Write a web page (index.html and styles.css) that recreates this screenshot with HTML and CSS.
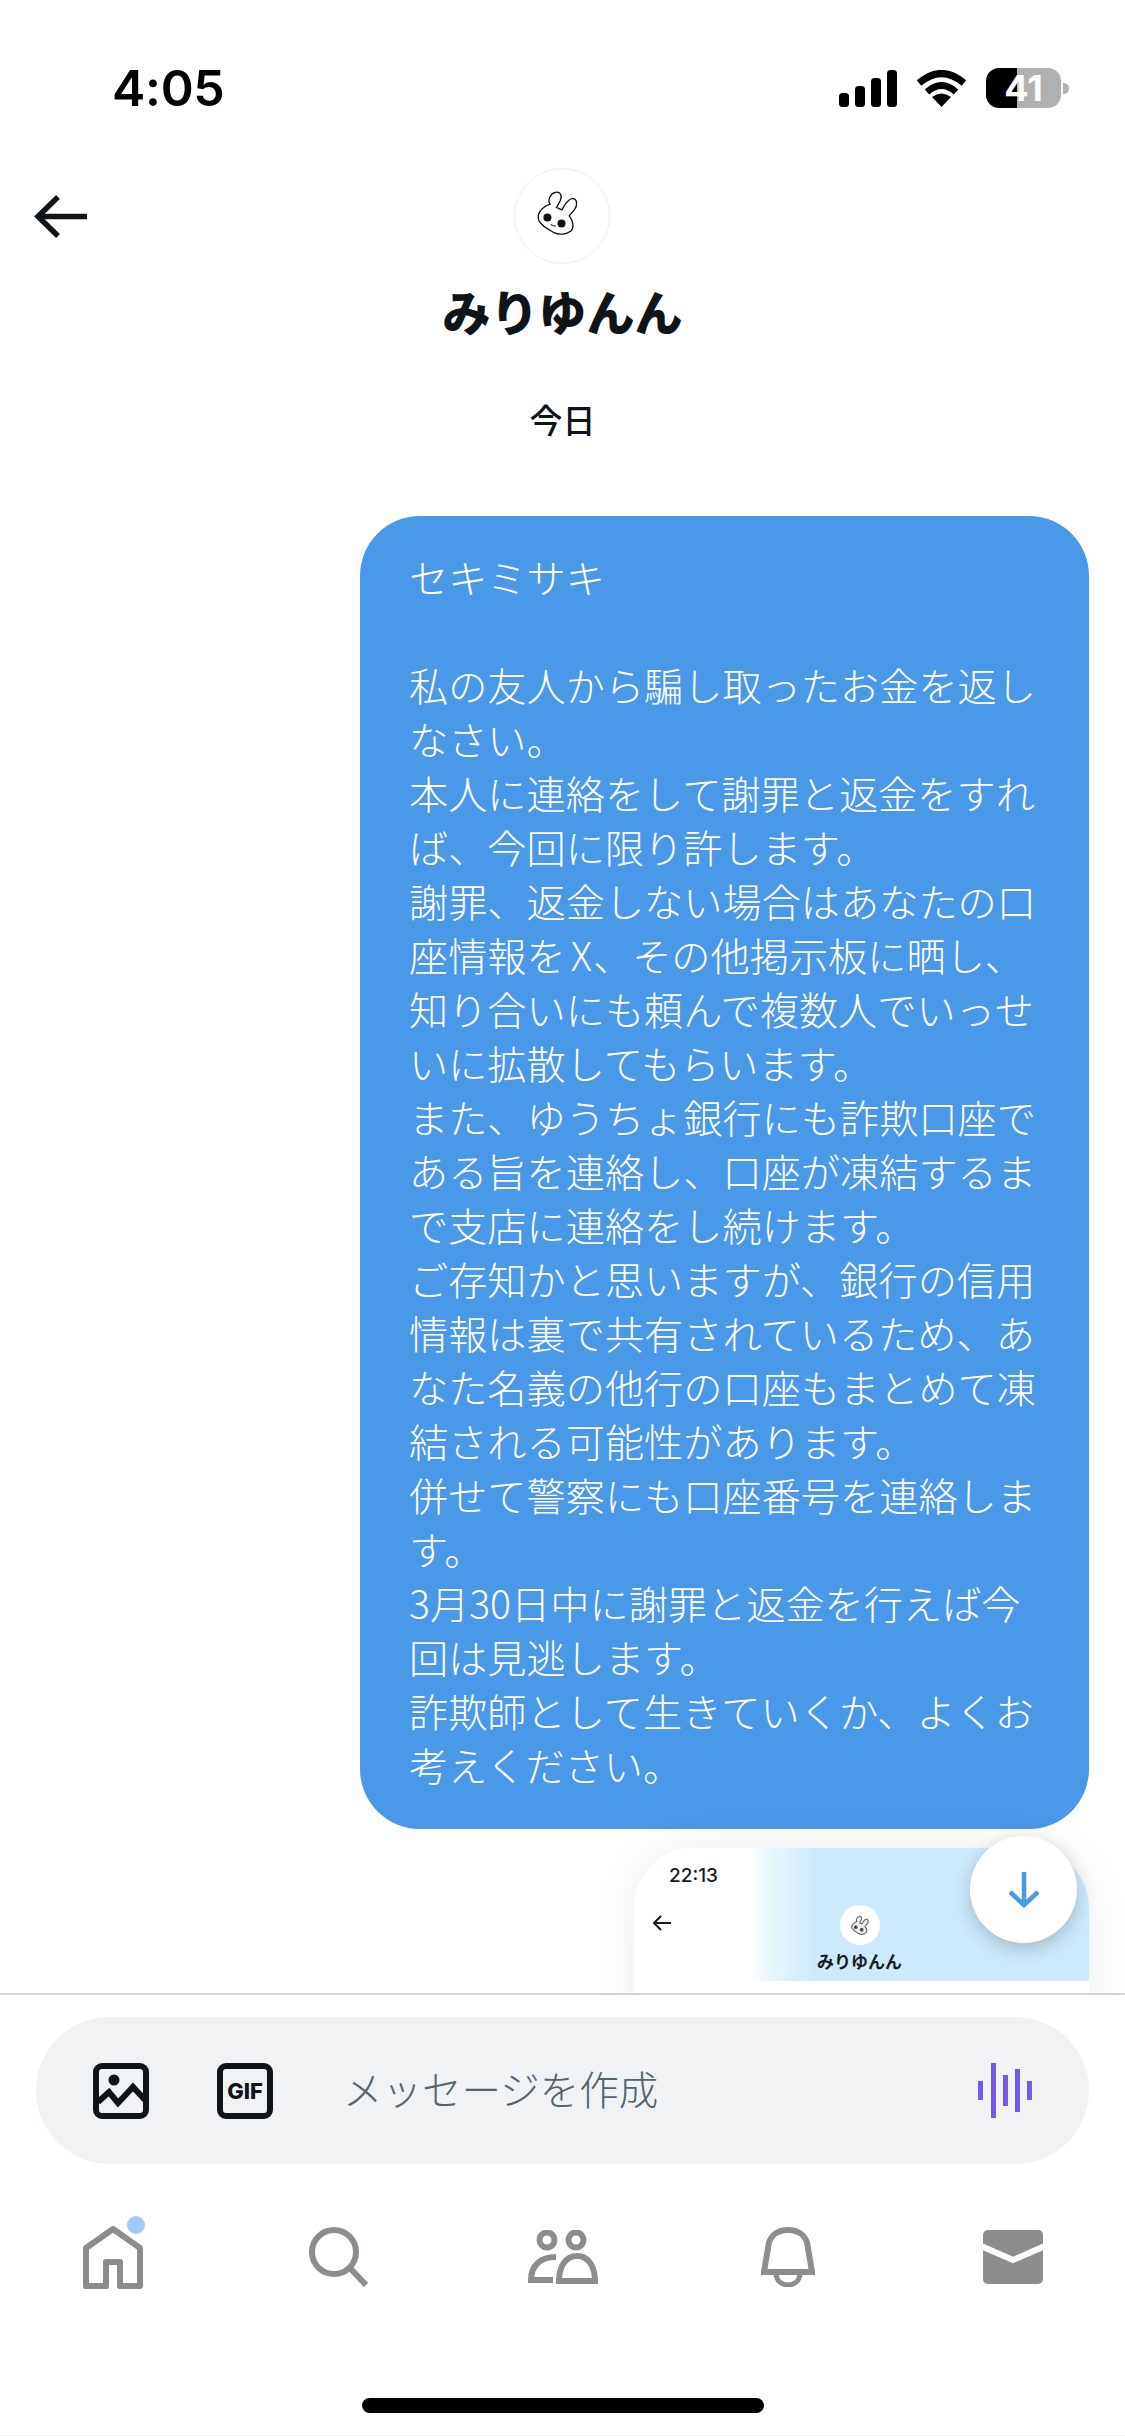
FILE: index.html
```html
<!DOCTYPE html>
<html lang="ja">
<head>
  <meta charset="UTF-8" />
  <meta name="viewport" content="width=device-width, initial-scale=1.0"/>
  <title>みりゆんん</title>
  <link rel="stylesheet" href="styles.css">
</head>
<body>
  <div class="screen">
    <div class="status-bar">
      <span class="clock">4:05</span>
      <div class="status-icons">
        <svg class="signal" width="58" height="37" viewBox="0 0 58 37">
          <rect x="0" y="23" width="10" height="14" rx="3.5"/>
          <rect x="16" y="16" width="10" height="21" rx="3.5"/>
          <rect x="32" y="8" width="10" height="29" rx="3.5"/>
          <rect x="48" y="0" width="10" height="37" rx="3.5"/>
        </svg>
        <svg class="wifi" width="51" height="37" viewBox="0 0 51 37">
          <path d="M3 13 Q25.5 -6 48 13" fill="none" stroke="#000" stroke-width="7"/>
          <path d="M11 22 Q25.5 9 40 22" fill="none" stroke="#000" stroke-width="6.5"/>
          <path d="M16 27 Q25.5 20 35 27 L25.5 37 Z"/>
        </svg>
        <div class="battery">
          <div class="battery-body"><span class="battery-level">41</span></div>
          <div class="battery-nub"></div>
        </div>
      </div>
    </div>

    <div class="header">
      <button class="back">
        <svg width="53" height="43" viewBox="0 0 53 43" fill="none" stroke="#0f1419" stroke-width="5.5">
          <path d="M24 2 L4 21.5 L24 41"/>
          <path d="M4 21.5 H53"/>
        </svg>
      </button>
      <div class="peer">
        <div class="avatar">
          <svg width="47" height="47" viewBox="165 110 140 140" fill="none" stroke="#111" stroke-width="4">
            <path d="M213 155 C205 145 212 125 228 120 C244 117 250 130 243 145 L232 165 L248 172 C255 160 265 140 280 138 C295 140 295 160 285 172 L270 190 C282 205 285 225 275 235 C262 245 240 248 225 240 C210 232 190 222 180 205 C172 185 185 165 213 155 Z"/>
            <circle cx="205" cy="195" r="10" fill="#111"/>
            <circle cx="247" cy="213" r="10" fill="#111"/>
            <path d="M215 215 Q222 223 230 219" stroke-width="3"/>
          </svg>
        </div>
        <div class="peer-name">みりゆんん</div>
      </div>
    </div>

    <div class="date-label">今日</div>

    <div class="messages">
      <div class="bubble">セキミサキ<br>
        <br>
        私の友人から騙し取ったお金を返し<br>
        なさい。<br>
        本人に連絡をして謝罪と返金をすれ<br>
        ば、今回に限り許します。<br>
        謝罪、返金しない場合はあなたの口<br>
        座情報を<span class="latin">X</span>、その他掲示板に晒し、<br>
        知り合いにも頼んで複数人でいっせ<br>
        いに拡散してもらいます。<br>
        また、ゆうちょ銀行にも詐欺口座で<br>
        ある旨を連絡し、口座が凍結するま<br>
        で支店に連絡をし続けます。<br>
        ご存知かと思いますが、銀行の信用<br>
        情報は裏で共有されているため、あ<br>
        なた名義の他行の口座もまとめて凍<br>
        結される可能性があります。<br>
        併せて警察にも口座番号を連絡しま<br>
        す。<br>
        3月30日中に謝罪と返金を行えば今<br>
        回は見逃します。<br>
        詐欺師として生きていくか、よくお<br>
        考えください。
      </div>

      <div class="shot">
        <div class="shot-top">
          <span class="shot-clock">22:13</span>
          <div class="shot-row">
            <svg class="shot-back" width="19" height="16" viewBox="0 0 19 16" fill="none" stroke="#1a1a1a" stroke-width="2">
              <path d="M9 1 L2 8 L9 15"/>
              <path d="M2 8 H19"/>
            </svg>
            <div class="shot-peer">
              <div class="shot-avatar">
                <svg width="20" height="20" viewBox="165 110 140 140" fill="#eee" stroke="#666" stroke-width="8">
                  <path d="M213 155 C205 145 212 125 228 120 C244 117 250 130 243 145 L232 165 L248 172 C255 160 265 140 280 138 C295 140 295 160 285 172 L270 190 C282 205 285 225 275 235 C262 245 240 248 225 240 C210 232 190 222 180 205 C172 185 185 165 213 155 Z"/>
                  <circle cx="205" cy="195" r="10" fill="#222"/>
                  <circle cx="247" cy="213" r="10" fill="#222"/>
                </svg>
              </div>
              <div class="shot-name">みりゆんん</div>
            </div>
          </div>
        </div>
      </div>

      <button class="scroll-down">
        <svg width="30" height="36" viewBox="0 0 30 36" fill="none" stroke="#4a98e8" stroke-width="4.5">
          <path d="M15 0 V33"/>
          <path d="M1 20 L15 33 L29 20"/>
        </svg>
      </button>
    </div>

    <div class="bottom">
      <div class="composer">
        <svg class="media-icon" width="56" height="56" viewBox="0 0 56 56" fill="none" stroke="#0f1419" stroke-width="6">
          <rect x="3" y="3" width="50" height="50" rx="6"/>
          <circle cx="21" cy="17" r="5.5" fill="#0f1419" stroke="none"/>
          <path d="M5 39 L16 29 L25 40 L40 24 L52 37"/>
        </svg>
        <div class="gif-icon">GIF</div>
        <span class="placeholder">メッセージを作成</span>
        <svg class="voice" width="54" height="55" viewBox="0 0 54 55" fill="#7659e6">
          <rect x="0" y="18" width="5" height="19"/>
          <rect x="13" y="0" width="5" height="55"/>
          <rect x="25" y="12" width="5" height="31"/>
          <rect x="37" y="6" width="5" height="43"/>
          <rect x="49" y="18" width="5" height="19"/>
        </svg>
      </div>

      <div class="tabs">
        <div class="tab">
          <svg width="60" height="63" viewBox="0 0 60 63" fill="none" stroke="#8b8d8e" stroke-width="6" stroke-linejoin="round">
            <path d="M3 60 V22 L30 3 L57 22 V60 H37 V36 H23 V60 Z"/>
          </svg>
          <span class="tab-dot"></span>
        </div>
        <div class="tab">
          <svg width="60" height="60" viewBox="0 0 60 60" fill="none" stroke="#8b8d8e" stroke-width="6">
            <circle cx="26" cy="25" r="22"/>
            <path d="M42 41 L58 58"/>
          </svg>
        </div>
        <div class="tab">
          <svg width="70" height="54" viewBox="0 0 70 54" fill="none" stroke="#8b8d8e" stroke-width="6">
            <circle cx="19" cy="10" r="7.5"/>
            <circle cx="48" cy="10" r="7.5"/>
            <path d="M25 50 H3 C3 36 12 27 28 27"/>
            <path d="M31 51 C31 36 38 26 49 26 C60 26 67 36 67 51 Z"/>
          </svg>
        </div>
        <div class="tab">
          <svg width="54" height="60" viewBox="0 0 54 60" fill="none" stroke="#8b8d8e" stroke-width="6">
            <path d="M3 45 L7 21 C8 9 16 3 27 3 C38 3 46 9 47 21 L51 45 Z"/>
            <path d="M15 46 C15 62 39 62 39 46" stroke-width="5"/>
          </svg>
        </div>
        <div class="tab">
          <svg width="60" height="54" viewBox="0 0 60 54">
            <rect width="60" height="54" rx="5" fill="#8b8d8e"/>
            <path d="M-2 16 L30 30 L62 16" fill="none" stroke="#fff" stroke-width="6"/>
          </svg>
        </div>
      </div>

      <div class="home-indicator"></div>
    </div>
  </div>
</body>
</html>
```

FILE: styles.css
```css
* {
  box-sizing: border-box;
}

body {
  margin: 0;
  background: #fff;
  font-family: "Noto Sans CJK JP", "Inter", sans-serif;
  color: #0f1419;
}

button {
  padding: 0;
  border: none;
  background: none;
}

.screen {
  display: flex;
  flex-direction: column;
  width: 1125px;
  height: 2436px;
  overflow: hidden;
}

/* status bar */
.status-bar {
  display: flex;
  justify-content: space-between;
  align-items: center;
  height: 130px;
  padding: 46px 56px 0 112px;
  flex-shrink: 0;
}

.clock {
  font-family: "Inter", sans-serif;
  font-size: 50px;
  font-weight: 600;
  letter-spacing: -0.3px;
  color: #000;
}

.status-icons {
  display: flex;
  align-items: center;
}

.wifi {
  margin-left: 19px;
}

.battery {
  display: flex;
  align-items: center;
  margin-left: 19px;
}

.battery-body {
  display: flex;
  justify-content: center;
  align-items: center;
  width: 75px;
  height: 40px;
  border-radius: 13px;
  background: linear-gradient(90deg, #000 41%, #b0b0b0 41%);
}

.battery-level {
  font-family: "Inter", sans-serif;
  font-size: 36px;
  font-weight: 700;
  line-height: 40px;
  color: #fff;
}

.battery-nub {
  width: 6px;
  height: 11px;
  margin-left: 2px;
  border-radius: 0 6px 6px 0;
  background: #b0b0b0;
}

/* header */
.header {
  display: grid;
  grid-template-columns: 1fr auto 1fr;
  padding-top: 38px;
  flex-shrink: 0;
}

.back {
  justify-self: start;
  margin: 27px 0 0 34px;
  height: 43px;
}

.peer {
  display: flex;
  flex-direction: column;
  align-items: center;
}

.avatar {
  display: flex;
  justify-content: center;
  align-items: center;
  width: 96px;
  height: 96px;
  border: 1px solid #eee;
  border-radius: 50%;
  padding: 0 10px 8px 0;
}

.peer-name {
  margin-top: 16px;
  font-size: 48px;
  font-weight: 900;
  line-height: 60px;
}

.date-label {
  margin-top: 59px;
  font-size: 33px;
  font-weight: 500;
  line-height: 40px;
  text-align: center;
  flex-shrink: 0;
}

/* messages */
.messages {
  position: relative;
  display: flex;
  flex-direction: column;
  align-items: flex-end;
  flex: 1;
  min-height: 0;
  padding: 77px 36px 0 0;
  overflow: hidden;
}

.bubble {
  width: 729px;
  padding: 33px 20px 38px 49px;
  border-radius: 60px;
  background: #4a98e8;
  color: #fff;
  font-size: 39.2px;
  font-weight: 300;
  line-height: 54px;
  white-space: nowrap;
  flex-shrink: 0;
}

.latin {
  margin: 0 1px 0 5px;
}

.shot {
  width: 455px;
  height: 300px;
  margin-top: 19px;
  border-radius: 60px 60px 0 0;
  background: #fff;
  box-shadow: 0 0 50px rgba(0, 0, 0, 0.07);
  overflow: hidden;
  flex-shrink: 0;
}

.shot-top {
  height: 133px;
  padding: 16px 0 0 35px;
  background: linear-gradient(90deg, #fff 25%, #e6f5fe 31%, #cbeafd 40%);
}

.shot-clock {
  display: block;
  font-family: "Inter", sans-serif;
  font-size: 19px;
  font-weight: 500;
  line-height: 24px;
  color: #1a1a1a;
}

.shot-row {
  display: flex;
  margin-top: 17px;
}

.shot-back {
  margin: 10px 0 0 -17px;
}

.shot-peer {
  display: flex;
  flex-direction: column;
  align-items: center;
  margin-left: 146px;
}

.shot-avatar {
  display: flex;
  justify-content: center;
  align-items: center;
  width: 40px;
  height: 40px;
  border-radius: 50%;
  background: #fff;
}

.shot-name {
  margin-top: 4px;
  font-size: 17px;
  font-weight: 700;
  line-height: 24px;
  color: #1a1a1a;
}

.scroll-down {
  position: absolute;
  top: 1397px;
  right: 48px;
  display: flex;
  justify-content: center;
  align-items: center;
  width: 107px;
  height: 107px;
  border-radius: 50%;
  background: #fff;
  box-shadow: 0 6px 18px rgba(0, 0, 0, 0.2);
}

/* bottom */
.bottom {
  height: 443px;
  padding-top: 22px;
  border-top: 2px solid #d4d4d4;
  border-bottom: 1px solid #eee;
  background: #fff;
  flex-shrink: 0;
}

.composer {
  display: flex;
  align-items: center;
  height: 147px;
  margin: 0 36px;
  padding: 0 57px;
  border-radius: 74px;
  background: #f0f2f4;
}

.gif-icon {
  display: flex;
  justify-content: center;
  align-items: center;
  width: 56px;
  height: 56px;
  margin-left: 68px;
  border: 6px solid #0f1419;
  border-radius: 9px;
  font-family: "Inter", sans-serif;
  font-size: 22px;
  font-weight: 800;
}

.placeholder {
  flex: 1;
  margin: 0 0 6px 70px;
  font-size: 39.5px;
  font-weight: 300;
  color: #536471;
}

.tabs {
  display: grid;
  grid-template-columns: repeat(5, 1fr);
  align-items: center;
  height: 64px;
  margin-top: 61px;
}

.tab {
  position: relative;
  display: flex;
  justify-content: center;
  align-items: center;
}

.tab-dot {
  position: absolute;
  top: -10px;
  left: 127px;
  width: 18px;
  height: 18px;
  border-radius: 50%;
  background: #9ccbf6;
}

.home-indicator {
  width: 402px;
  height: 15px;
  margin: 109px auto 0;
  border-radius: 8px;
  background: #000;
}
```
